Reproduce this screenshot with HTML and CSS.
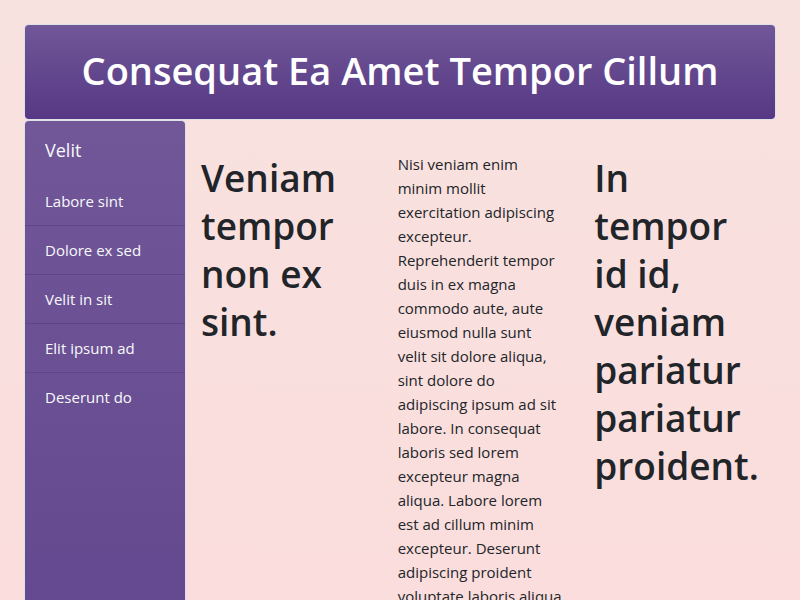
FILE: index.html
```html
<!DOCTYPE html>
<html lang="la">
<head>
<meta charset="utf-8">
<meta name="viewport" content="width=device-width, initial-scale=1">
<title>Consequat Ea Amet Tempor Cillum</title>
<link rel="stylesheet" href="styles.css">
</head>
<body>
<header class="banner"><h1>Consequat Ea Amet Tempor Cillum</h1></header>
<div class="layout">
  <nav class="sidebar" aria-labelledby="nav-title">
    <h2 class="sidebar-title" id="nav-title">Velit</h2>
    <ul class="menu">
      <li><a href="#">Labore sint</a></li>
      <li><a href="#">Dolore ex sed</a></li>
      <li><a href="#">Velit in sit</a></li>
      <li><a href="#">Elit ipsum ad</a></li>
      <li><a href="#">Deserunt do</a></li>
    </ul>
  </nav>
  <main class="columns">
    <section><h1>Veniam tempor non ex sint.</h1></section>
    <section><p>Nisi veniam enim minim mollit exercitation adipiscing excepteur. Reprehenderit tempor duis in ex magna commodo aute, aute eiusmod nulla sunt<br>velit sit dolore aliqua, sint dolore do adipiscing ipsum ad sit labore. In consequat laboris sed lorem excepteur magna aliqua. Labore lorem est ad cillum minim excepteur. Deserunt adipiscing proident voluptate laboris aliqua</p></section>
    <section><h1>In tempor id id, veniam pariatur pariatur proident.</h1></section>
  </main>
</div>
</body>
</html>
```
FILE: styles.css
```css
* {
  box-sizing: border-box;
}

html {
  height: 100%;
  overflow: hidden;
}

body {
  height: 100%;
  margin: 0;
  padding: 24px 24px 0;
  display: flex;
  flex-direction: column;
  overflow: hidden;
  background: linear-gradient(#f8e2df, #fadddc);
  color: #212529;
  font: 15px/24px "Segoe UI", "Open Sans", "Noto Sans", sans-serif;
}

h1,
h2,
p,
ul {
  margin: 0;
}

h1 {
  font-size: 38px;
  line-height: 48px;
  font-weight: 600;
}

.banner {
  flex: none;
  padding: 21px 24px 25px;
  border: 1px solid #dee2e6;
  border-radius: 4px;
  background: linear-gradient(#715798, #563884) padding-box;
  color: #fff;
  text-align: center;
}

.layout {
  flex: 1;
  min-height: 0;
  display: flex;
}

.sidebar {
  flex: none;
  width: 162px;
  min-height: 840px;
  border: 1px solid #dee2e6;
  border-radius: 4px;
  background: linear-gradient(#715798, #5b3f8a) padding-box;
  color: #f8f9fa;
}

.sidebar-title {
  padding: 15px 20px 13px;
  font-size: 18px;
  line-height: 28px;
  font-weight: 400;
}

.menu {
  padding: 0;
  list-style: none;
}

.menu li + li {
  border-top: 1px solid #5f4586;
}

.menu a {
  display: block;
  padding: 12px 20px;
  color: #f8f9fa;
  text-decoration: none;
}

.columns {
  flex: 1;
  min-width: 0;
  display: grid;
  grid-template-columns: repeat(3, minmax(0, 1fr));
  padding-top: 32px;
}

.columns section {
  padding: 0 15px;
}

.columns h1 {
  padding-top: 2px;
  font-size: 37px;
}
```
